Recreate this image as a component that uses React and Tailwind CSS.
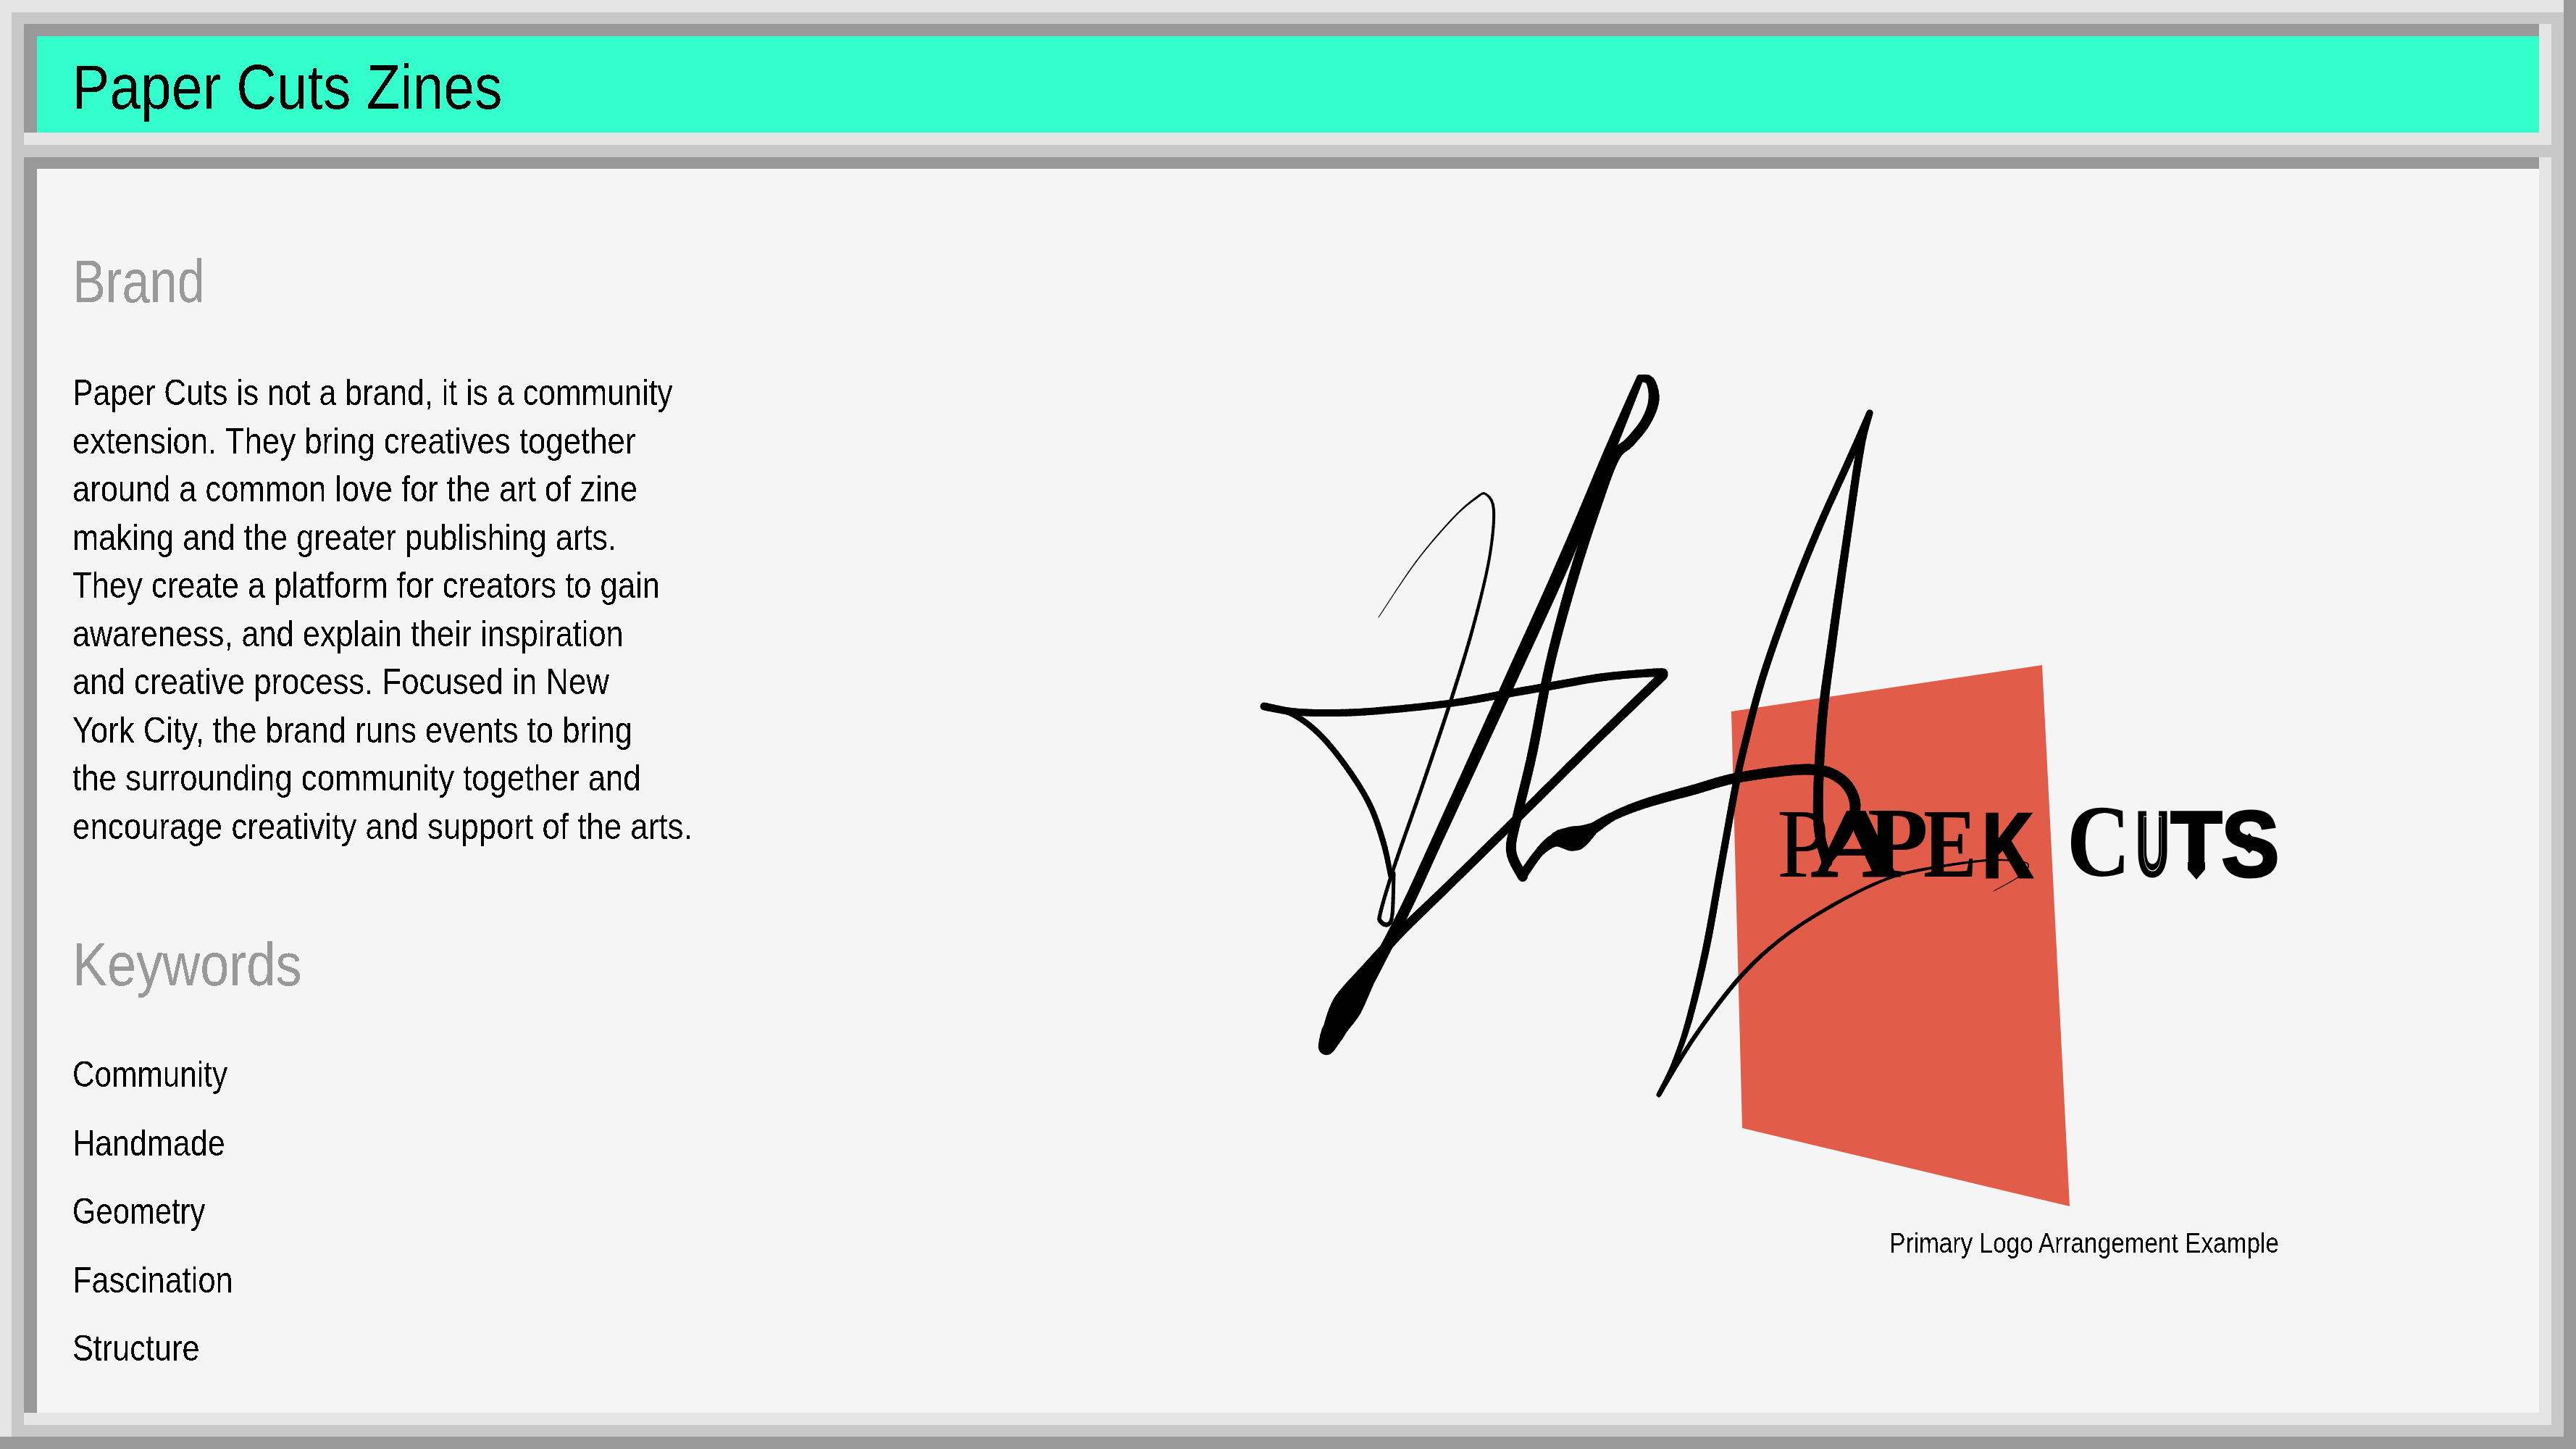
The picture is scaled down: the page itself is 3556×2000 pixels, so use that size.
const para = [
  ["Paper Cuts is not a brand, it is a community", "scale-x-[0.857]"],
  ["extension. They bring creatives together", "scale-x-[0.875]"],
  ["around a common love for the art of zine", "scale-x-[0.869]"],
  ["making and the greater publishing arts.", "scale-x-[0.869]"],
  ["They create a platform for creators to gain", "scale-x-[0.871]"],
  ["awareness, and explain their inspiration", "scale-x-[0.866]"],
  ["and creative process. Focused in New", "scale-x-[0.874]"],
  ["York City, the brand runs events to bring", "scale-x-[0.872]"],
  ["the surrounding community together and", "scale-x-[0.874]"],
  ["encourage creativity and support of the arts.", "scale-x-[0.877]"],
];
const keywords = [
  ["Community", "scale-x-[0.847]"],
  ["Handmade", "scale-x-[0.861]"],
  ["Geometry", "scale-x-[0.835]"],
  ["Fascination", "scale-x-[0.867]"],
  ["Structure", "scale-x-[0.865]"],
];

const strokes = [
  [[1903,852,1],[1955,775,1.5],[2006,715,2],[2038,687,3],[2051,682,3],[2062,704,4],[2056,770,4],[2035,860,4.5],[2006,957,5],[1965,1080,5],[1925,1195,5],[1906,1258,5],[1906,1272,6],[1916,1276,6],[1922,1262,5],[1924,1205,5]],
  [[1745,975,9],[1783,985,8],[1821,1013,8],[1859,1059,8],[1891,1111,8],[1910,1164,8],[1920,1210,7]],
  [[1745,975,11],[1783,982,10],[1828,984,10],[1891,982,10],[2000,971,10],[2083,957,11],[2146,946,11],[2210,935,11],[2274,929,11],[2296,929,13]],
  [[2296,932,13],[2200,1025,12],[2102,1122,12],[2000,1222,12],[1930,1290,13],[1885,1340,16],[1850,1385,22],[1835,1425,20]],
  [[1831,1445,20],[1843,1420,32],[1866,1392,28],[1891,1350,17],[1940,1255,15],[1987,1153,15],[2083,943,17],[2159,775,18],[2223,620,15],[2264,522,10]],
  [[2264,522,9],[2278,526,12],[2283,552,15],[2272,582,14],[2250,610,14],[2229,631,14],[2204,697,14],[2172,796,14],[2140,915,13],[2115,1041,13],[2095,1125,13],[2086,1174,14],[2102,1210,14]],
  [[2102,1208,13],[2127,1174,12],[2150,1158,18],[2175,1157,34],[2200,1143,16],[2230,1125,12],[2274,1108,13],[2338,1090,14],[2401,1073,14],[2497,1062,15],[2542,1076,15],[2561,1111,15],[2548,1153,13],[2523,1188,12]],
  [[2522,1190,15],[2510,1130,14],[2515,1000,13],[2530,880,12],[2550,740,11],[2568,620,11],[2581,570,9]],
  [[2581,570,9],[2555,630,10],[2510,730,10],[2470,830,10],[2433,936,10],[2408,1030,10],[2395,1090,10],[2375,1200,10],[2355,1310,10],[2331,1410,9],[2310,1470,7],[2290,1511,7]],
  [[2290,1511,6],[2340,1430,6],[2401,1350,6],[2460,1295,5],[2529,1250,5],[2600,1215,4],[2655,1200,4],[2737,1188,3],[2780,1188,2],[2800,1193,1.5],[2790,1208,1.5],[2752,1230,1]],
];

function sample(pts) {
  const out = [];
  for (let i = 0; i < pts.length - 1; i++) {
    const p0 = pts[Math.max(i - 1, 0)], p1 = pts[i], p2 = pts[i + 1], p3 = pts[Math.min(i + 2, pts.length - 1)];
    const n = Math.max(4, Math.ceil(Math.hypot(p2[0] - p1[0], p2[1] - p1[1]) / 6));
    for (let k = 0; k < n; k++) {
      const t = k / n;
      const f = (j) =>
        0.5 * (2 * p1[j] + (p2[j] - p0[j]) * t + (2 * p0[j] - 5 * p1[j] + 4 * p2[j] - p3[j]) * t * t + (3 * p1[j] - p0[j] - 3 * p2[j] + p3[j]) * t * t * t);
      out.push([f(0), f(1), Math.max(0.8, p1[2] + (p2[2] - p1[2]) * t)]);
    }
  }
  out.push(pts[pts.length - 1]);
  return out;
}

function Signature() {
  return (
    <g stroke="#000" strokeLinecap="round">
      {strokes.map((s, i) => {
        const pts = sample(s);
        return pts.slice(1).map((p, j) => (
          <line key={i + "-" + j} x1={pts[j][0]} y1={pts[j][1]} x2={p[0]} y2={p[1]} strokeWidth={p[2]} />
        ));
      })}
    </g>
  );
}

function Letter({ x, y = 1210, w, size = 136, font = "Liberation Serif", weight = 400, children, ...rest }) {
  return (
    <text x={x} y={y} textLength={w} lengthAdjust="spacingAndGlyphs" fontFamily={font} fontWeight={weight} fontSize={size} {...rest}>
      {children}
    </text>
  );
}

function Logo() {
  return (
    <svg viewBox="1700 480 1460 1190" className="block w-[1460px] h-[1190px]">
      <polygon points="2390,982 2819,918 2857,1665 2405,1557" fill="#e25d49" />
      <Letter x={2453} w={72}>P</Letter>
      <Letter x={2500} w={124} weight={700} stroke="#000" strokeWidth={2}>A</Letter>
      <Letter x={2578} w={84} y={1208} weight={700}>P</Letter>
      <Letter x={2655} w={74} weight={700}>E</Letter>
      <Letter x={2737} w={68} weight={700} font="Liberation Sans" size={125} stroke="#000" strokeWidth={5}>K</Letter>
      <Letter x={2853} w={88} y={1209} size={142} weight={700}>C</Letter>
      <Letter x={2949} w={45} y={1208} weight={700} font="Liberation Sans" size={124} stroke="#000" strokeWidth={5}>U</Letter>
      <Letter x={2957} w={29} y={1201} weight={700} font="Liberation Sans" size={108} fill="none" stroke="#f5f5f5" strokeWidth={1.2}>U</Letter>
      <Letter x={2998} w={68} y={1195} weight={700} font="Liberation Sans" size={106} stroke="#000" strokeWidth={6}>T</Letter>
      <polygon points="3020,1190 3044,1190 3044,1200 3032,1214 3020,1200" fill="#000" />
      <Letter x={3066} w={81} y={1210} weight={700} font="Liberation Sans" size={130} stroke="#000" strokeWidth={3}>S</Letter>
      <polygon points="3105,1150 3118,1165 3105,1178 3092,1165" fill="#000" />
      <Signature />
    </svg>
  );
}

export default function App() {
  return (
    <div className="h-[2000px] w-full bg-[#999999] pr-[17px] pb-[17px] font-['Liberation_Sans',sans-serif] text-black">
      <svg className="absolute w-0 h-0" aria-hidden="true">
        <filter id="crisp" x="0" y="0" width="100%" height="100%">
          <feComponentTransfer>
            <feFuncA type="discrete" tableValues="0 1" />
          </feComponentTransfer>
        </filter>
      </svg>
      <div className="h-full bg-[#e5e5e5] pl-[16px] pt-[17px]">
        <div className="h-full bg-[#c8c8c8] pl-[17px] pr-[17px] pt-[16px] pb-[16px] flex flex-col gap-[17px]">
          <div className="h-[167px] shrink-0 bg-[#e5e5e5] pr-[17px] pb-[17px]">
            <header className="h-full bg-[#999999] pl-[18px] pt-[17px]">
              <div className="h-full bg-[#33ffcc] pl-[49px] pt-[5px]">
                <h1 className="text-[88px] leading-[130px] font-normal origin-left scale-x-[0.873] whitespace-nowrap [filter:url(#crisp)]">Paper Cuts Zines</h1>
              </div>
            </header>
          </div>
          <div className="flex-1 min-h-0 bg-[#e5e5e5] pr-[17px] pb-[17px]">
            <main className="h-full bg-[#999999] pl-[18px] pt-[16px]">
              <div className="h-full bg-[#f5f5f5] flex">
                <section className="pl-[49px] pt-[105px] w-[1200px] shrink-0 [filter:url(#crisp)]">
                  <h2 className="text-[84px] leading-[100px] font-normal text-[#999999] origin-left scale-x-[0.816]">Brand</h2>
                  <div className="mt-[71px] text-[50px] leading-[66.5px]">
                    {para.map(([l, s]) => (
                      <p key={l} className={"whitespace-nowrap origin-left " + s}>{l}</p>
                    ))}
                  </div>
                  <h2 className="mt-[107px] text-[84px] leading-[100px] font-normal text-[#999999] origin-left scale-x-[0.858]">Keywords</h2>
                  <ul className="mt-[55px] text-[50px] leading-[94.6px]">
                    {keywords.map(([k, s]) => (
                      <li key={k} className={"origin-left " + s}>{k}</li>
                    ))}
                  </ul>
                </section>
                <figure className="ml-auto mr-[345px] pt-[247px] w-[1460px]">
                  <Logo />
                  <figcaption className="mt-[23px] pr-[14px] text-right text-[38px] leading-[46px] origin-[1446px_50%] scale-x-[0.878] [filter:url(#crisp)]">Primary Logo Arrangement Example</figcaption>
                </figure>
              </div>
            </main>
          </div>
        </div>
      </div>
    </div>
  );
}
